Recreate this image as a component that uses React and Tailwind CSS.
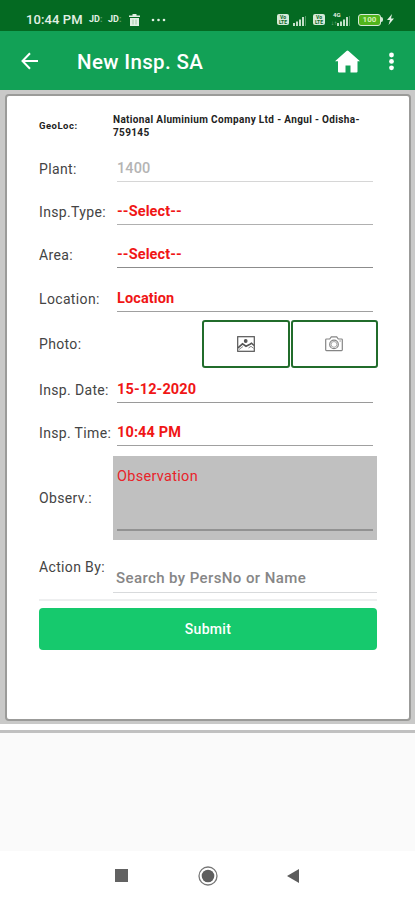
const fields = [
    { label: "Plant:", value: "1400", color: "text-[#b4b4b4] font-medium", line: "border-[#d6d6d6]" },
    { label: "Insp.Type:", value: "--Select--", color: "text-[#f01616] font-bold", line: "border-[#b0b0b0]" },
    { label: "Area:", value: "--Select--", color: "text-[#f01616] font-bold", line: "border-[#8c8c8c]" },
    { label: "Location:", value: "Location", color: "text-[#f01616] font-bold", line: "border-[#a0a0a0]" },
];

const dateFields = [
    { label: "Insp. Date:", value: "15-12-2020", color: "text-[#f01616] font-bold", line: "border-[#9a9a9a]" },
    { label: "Insp. Time:", value: "10:44 PM", color: "text-[#f01616] font-bold", line: "border-[#a0a0a0]" },
];

const Label = ({ children }) => (
    <span className="w-[74px] shrink-0 whitespace-nowrap text-[14px] leading-[18px] tracking-[0.35px] text-[#444]">
        {children}
    </span>
);

const Field = ({ label, value, color, line }) => (
    <div className="flex h-[43.3px] items-center">
        <Label>{label}</Label>
        <div className={`mx-1 mt-px h-[25px] flex-1 border-b ${line}`}>
            <p className={`text-[14.5px] leading-[24px] tracking-[0.12px] ${color}`}>{value}</p>
        </div>
    </div>
);

const Signal = () => (
    <svg width="13" height="10" viewBox="0 0 13 10" fill="#c2dfc8">
        <rect x="0" y="7" width="2" height="3" />
        <rect x="3" y="5.5" width="2" height="4.5" />
        <rect x="6" y="3.5" width="2" height="6.5" />
        <rect x="9" y="1" width="2" height="9" />
        <rect x="12" y="0" width="1" height="10" opacity="0.4" />
    </svg>
);

const Volte = () => (
    <div className="flex h-[11px] w-[12px] flex-col items-center justify-center rounded-[2px] bg-[#d5ead9] text-[5px] font-bold leading-[4.5px] text-[#08651f]">
        <span>Vo</span>
        <span>LTE</span>
    </div>
);

const StatusBar = () => (
    <div className="flex h-[31px] items-center bg-[#046a22] pl-[26px] pr-[21px] pt-[8px] text-[#e2f0e4]">
        <span className="w-[59px] whitespace-nowrap text-[13px] font-medium tracking-[0.1px]">10:44 PM</span>
        <span className="ml-[4px] w-[19px] text-[9px] font-bold leading-none">JD<span className="opacity-40">:</span></span>
        <span className="w-[19px] text-[9px] font-bold leading-none">JD<span className="opacity-40">:</span></span>
        <svg className="ml-[2px]" width="11" height="12" viewBox="0 0 11 12" fill="currentColor">
            <path d="M3.5 0h4v1.5H11V3H0V1.5h3.5z" />
            <path d="M1 4h9v8H1z" />
            <path d="M4 5.5v5M7 5.5v5" stroke="#8fbc98" strokeWidth="0.8" />
        </svg>
        <svg className="ml-[11px]" width="15" height="4" viewBox="0 0 15 4" fill="currentColor">
            <circle cx="2" cy="2" r="1.3" />
            <circle cx="7.5" cy="2" r="1.3" />
            <circle cx="13" cy="2" r="1.3" />
        </svg>
        <div className="ml-auto flex items-center">
            <Volte />
            <div className="ml-[4px] mt-[2px]"><Signal /></div>
            <div className="ml-[7px]"><Volte /></div>
            <div className="relative ml-[12px] mt-[2px]">
                <Signal />
                <span className="absolute -left-[4px] -top-[4px] text-[6px] font-bold leading-[6px]">4G</span>
                <span className="absolute -left-[6px] top-[4px] text-[6px] leading-[6px] opacity-60">↓↑</span>
            </div>
            <div className="ml-[8px] flex items-center">
                <div className="flex h-[12px] w-[23px] items-center justify-center rounded-[3px] border border-[#d5ead9] bg-[#50b51c] text-[8px] font-bold leading-none text-[#d3f2b8]">100</div>
                <div className="h-[5px] w-[2px] rounded-r-sm bg-[#d5ead9]" />
            </div>
            <svg className="ml-[4px]" width="7" height="11" viewBox="0 0 7 11" fill="currentColor">
                <path d="M5 0L0 6h3L1.5 11L7 4.5H4z" />
            </svg>
        </div>
    </div>
);

const Header = () => (
    <div className="flex h-[59px] items-center bg-[#12a156] pl-[21px] pr-[21px] text-white">
        <svg width="17" height="18" viewBox="0 0 17 18" fill="none" stroke="currentColor" strokeWidth="2">
            <path d="M17 9H1.5M9 1.2L1.5 9L9 16.8" />
        </svg>
        <h1 className="ml-[39px] mt-[3px] text-[20.5px] font-medium tracking-[0.35px]">New Insp. SA</h1>
        <svg className="ml-auto mt-[2px]" width="25" height="23" viewBox="0 0 25 23" fill="currentColor">
            <path d="M12.5 0.5Q13 0.5 13.5 1L25 11.2h-2.5v10.3q0 1-1 1h-6v-7h-5v7H4q-1 0-1-1V11.2H0L11.5 1Q12 0.5 12.5 0.5z" />
        </svg>
        <svg className="ml-[29px] mt-[1px]" width="5" height="19" viewBox="0 0 5 19" fill="currentColor">
            <circle cx="2.5" cy="3" r="2.4" />
            <circle cx="2.5" cy="9.4" r="2.4" />
            <circle cx="2.5" cy="15.8" r="2.4" />
        </svg>
    </div>
);

const PhotoRow = () => (
    <div className="-mr-px flex h-[48px] items-center">
        <Label>Photo:</Label>
        <div className="ml-auto flex gap-px">
            <div className="flex h-[48px] w-[87.5px] items-center justify-center rounded-[3px] border-2 border-[#216c2b]">
                <svg width="18" height="16" viewBox="0 0 18 16" fill="none" stroke="#555" strokeWidth="1.2">
                    <rect x="0.7" y="0.7" width="16.6" height="14.6" />
                    <path d="M1 11.8L5.5 7.8L9 10.2L13 8.2L14.5 7.2L17 9.5" strokeWidth="1.6" />
                    <path d="M2 13.5L6 10.5M11.5 12L14 10.3L16.5 12.3" strokeWidth="0.7" />
                    <circle cx="8.7" cy="5" r="1.3" fill="#555" />
                </svg>
            </div>
            <div className="flex h-[48px] w-[87.5px] items-center justify-center rounded-[3px] border-2 border-[#216c2b]">
                <svg width="18" height="16" viewBox="0 0 18 16" fill="none" stroke="#858585" strokeWidth="1.2">
                    <path d="M1.5 3h3.2L6.3.9h5.4L13.3 3h3.2q.8 0 .8.8v10q0 .8-.8.8h-15q-.8 0-.8-.8v-10q0-.8.8-.8z" />
                    <circle cx="9" cy="8.4" r="4.3" />
                    <circle cx="9" cy="8.4" r="2.9" strokeWidth="0.7" />
                    <path d="M14.5 5h1.3" />
                </svg>
            </div>
        </div>
    </div>
);

const NavBar = () => (
    <div className="flex h-[49px] items-center bg-white pl-[115px]">
        <div className="h-[13px] w-[13px] bg-[#626262]" />
        <svg className="ml-[70px]" width="20" height="20" viewBox="0 0 20 20">
            <circle cx="10" cy="10" r="9" fill="none" stroke="#777" strokeWidth="1.3" />
            <circle cx="10" cy="10" r="6.3" fill="#5e5e5e" />
        </svg>
        <svg className="ml-[69px]" width="12" height="14" viewBox="0 0 12 14" fill="#5c5c5c">
            <path d="M12 0v14L0 7z" />
        </svg>
    </div>
);

export default function App() {
    return (
        <div className="flex h-[900px] w-[415px] flex-col overflow-hidden bg-[#fafafa] font-[Roboto,sans-serif]">
            <StatusBar />
            <Header />

            <div className="h-[634px] bg-[#c9c9c8] pl-[4.5px] pr-[4px] pt-[4px]">
                <div className="h-[627px] rounded-[4px] border-2 border-[#9b9b99] bg-white pl-[32.5px] pr-[32px] pt-px">
                    {/* Plant location */}
                    <div className="flex h-[50px] items-center pt-[7px] text-[10px] font-bold leading-[13px] text-[#222]">
                        <span className="w-[74px] shrink-0 text-[9.5px] tracking-[0.5px]">GeoLoc:</span>
                        <p className="whitespace-nowrap tracking-[0.35px]">
                            National Aluminium Company Ltd - Angul - Odisha-
                            <br />
                            759145
                        </p>
                    </div>

                    {fields.map((field) => (
                        <Field key={field.label} label={field.label} value={field.value} color={field.color} line={field.line} />
                    ))}
                    <PhotoRow />
                    {dateFields.map((field) => (
                        <Field key={field.label} label={field.label} value={field.value} color={field.color} line={field.line} />
                    ))}

                    {/* Observation */}
                    <div className="mt-px flex h-[84px] items-center">
                        <Label>Observ.:</Label>
                        <div className="h-[84px] flex-1 bg-[#c0c0c0] px-1 pt-[11px]">
                            <div className="h-[64px] border-b-2 border-[#929292] text-[14.5px] leading-[20px] tracking-[0.3px] text-[#e8242a]">
                                Observation
                            </div>
                        </div>
                    </div>

                    <div className="flex h-[61px] items-start border-b-2 border-[#eeeff0]">
                        <div className="flex w-[74px] shrink-0 pt-[18px]">
                            <Label>Action By:</Label>
                        </div>
                        <div className="h-[53px] flex-1 border-b border-[#d8dadc] pl-[3px] pt-[28px] text-[15px] font-medium leading-[20px] tracking-[0.4px] text-[#868686]">
                            Search by PersNo or Name
                        </div>
                    </div>

                    <button className="mt-[7px] block h-[42px] w-full rounded-[4px] bg-[#16c96d] pt-[2px] text-[14px] font-medium tracking-[0.3px] text-white">
                        Submit
                    </button>
                </div>
            </div>

            <div className="h-[6px] bg-white" />
            <div className="h-[3px] bg-[#c0c0c0]" />
            <div className="flex-1 bg-[#fafafa]" />
            <NavBar />
        </div>
    );
}
